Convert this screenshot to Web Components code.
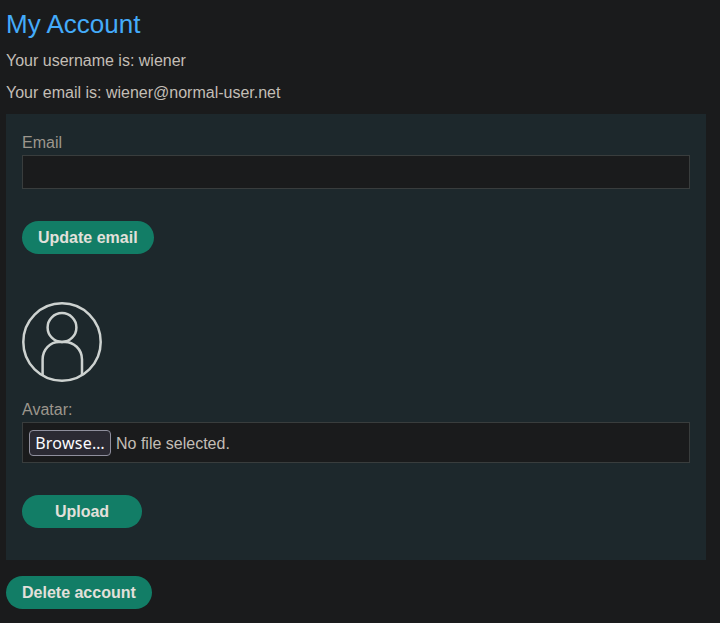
<!DOCTYPE html>
<html lang="en">
<head>
<meta charset="utf-8">
<title>My Account</title>
<style>
html, body { margin: 0; background: #1a1b1c; }
body { font: 16px/18px "Liberation Sans", Arial, sans-serif; color: #c3beb6; height: 623px; overflow: hidden; }
</style>
</head>
<body>
<account-page></account-page>
<script>
const define = (name, html) => customElements.define(name, class extends HTMLElement {
  constructor() {
    super();
    const t = document.createElement('template');
    t.innerHTML = html;
    this.attachShadow({ mode: 'open' }).append(t.content.cloneNode(true));
  }
});

define('pill-button', `
<style>
:host { display: block; width: fit-content; }
button { display: block; height: 33px; min-width: 120px; padding: 0 16px; border: 0; border-radius: 17px; background: #127d66; color: #e2e0db; font: bold 16px/33px "Liberation Sans", Arial, sans-serif; }
</style>
<button type="button"><slot></slot></button>`);

define('text-field', `
<style>
:host { display: block; }
label { display: block; height: 22px; line-height: 20px; color: #9c968c; }
input { display: block; box-sizing: border-box; width: 100%; height: 34px; margin: 0; padding: 0 6px; border: 1px solid #393d3d; border-radius: 0; background: #1a1b1c; color: inherit; font: inherit; outline: 0; }
</style>
<label for="i"><slot></slot></label>
<input id="i" type="email">`);

define('file-field', `
<style>
:host { display: block; }
.label { height: 22px; line-height: 20px; color: #9c968c; }
.box { display: flex; align-items: center; gap: 5px; box-sizing: border-box; height: 41px; padding: 0 6px; border: 1px solid #393d3d; background: #1a1b1c; }
.box span { padding-top: 2px; }
button { box-sizing: border-box; width: 82px; height: 26px; padding: 0; border: 1px solid #8f8f9d; border-radius: 4px; background: #2b2a33; color: #fbfbfe; font: 16px/24px "Noto Sans", sans-serif; letter-spacing: .25px; white-space: nowrap; }
</style>
<div class="label"><slot></slot></div>
<div class="box"><button type="button">Browse…</button><span>No file selected.</span></div>`);

define('user-avatar', `
<style>
:host, svg { display: block; width: 80px; height: 80px; }
</style>
<svg viewBox="0 0 80 80" fill="none" stroke="#cdd2d0" stroke-width="2.5">
<circle cx="40" cy="40" r="38.7"/>
<circle cx="40" cy="25.5" r="14.4"/>
<path d="M20.600 73.500V57.500C20.600 47 28.500 39.900 37 39.900H43C51.500 39.900 60 47 60 57.500V73.500"/>
</svg>`);

define('form-panel', `
<style>
:host { display: flex; flex-direction: column; box-sizing: border-box; height: 446px; padding: 19px 16px 32px; background: #1d282c; }
::slotted(pill-button) { margin-top: 32px; }
::slotted(user-avatar) { margin: 48px 0 18px; }
</style>
<slot></slot>`);

define('account-page', `
<style>
:host { display: block; padding: 9px 14px 0 6px; }
h1 { margin: 0 0 13px; font-size: 26px; line-height: 30px; font-weight: 400; color: #44abfa; }
p { margin: 0 0 14px; line-height: 18px; }
p + form-panel { margin-top: -2px; }
form-panel { margin-bottom: 16px; }
</style>
<h1>My Account</h1>
<p>Your username is: wiener</p>
<p>Your email is: wiener@normal-user.net</p>
<form-panel>
  <text-field>Email</text-field>
  <pill-button>Update email</pill-button>
  <user-avatar></user-avatar>
  <file-field>Avatar:</file-field>
  <pill-button>Upload</pill-button>
</form-panel>
<pill-button>Delete account</pill-button>`);
</script>
</body>
</html>
